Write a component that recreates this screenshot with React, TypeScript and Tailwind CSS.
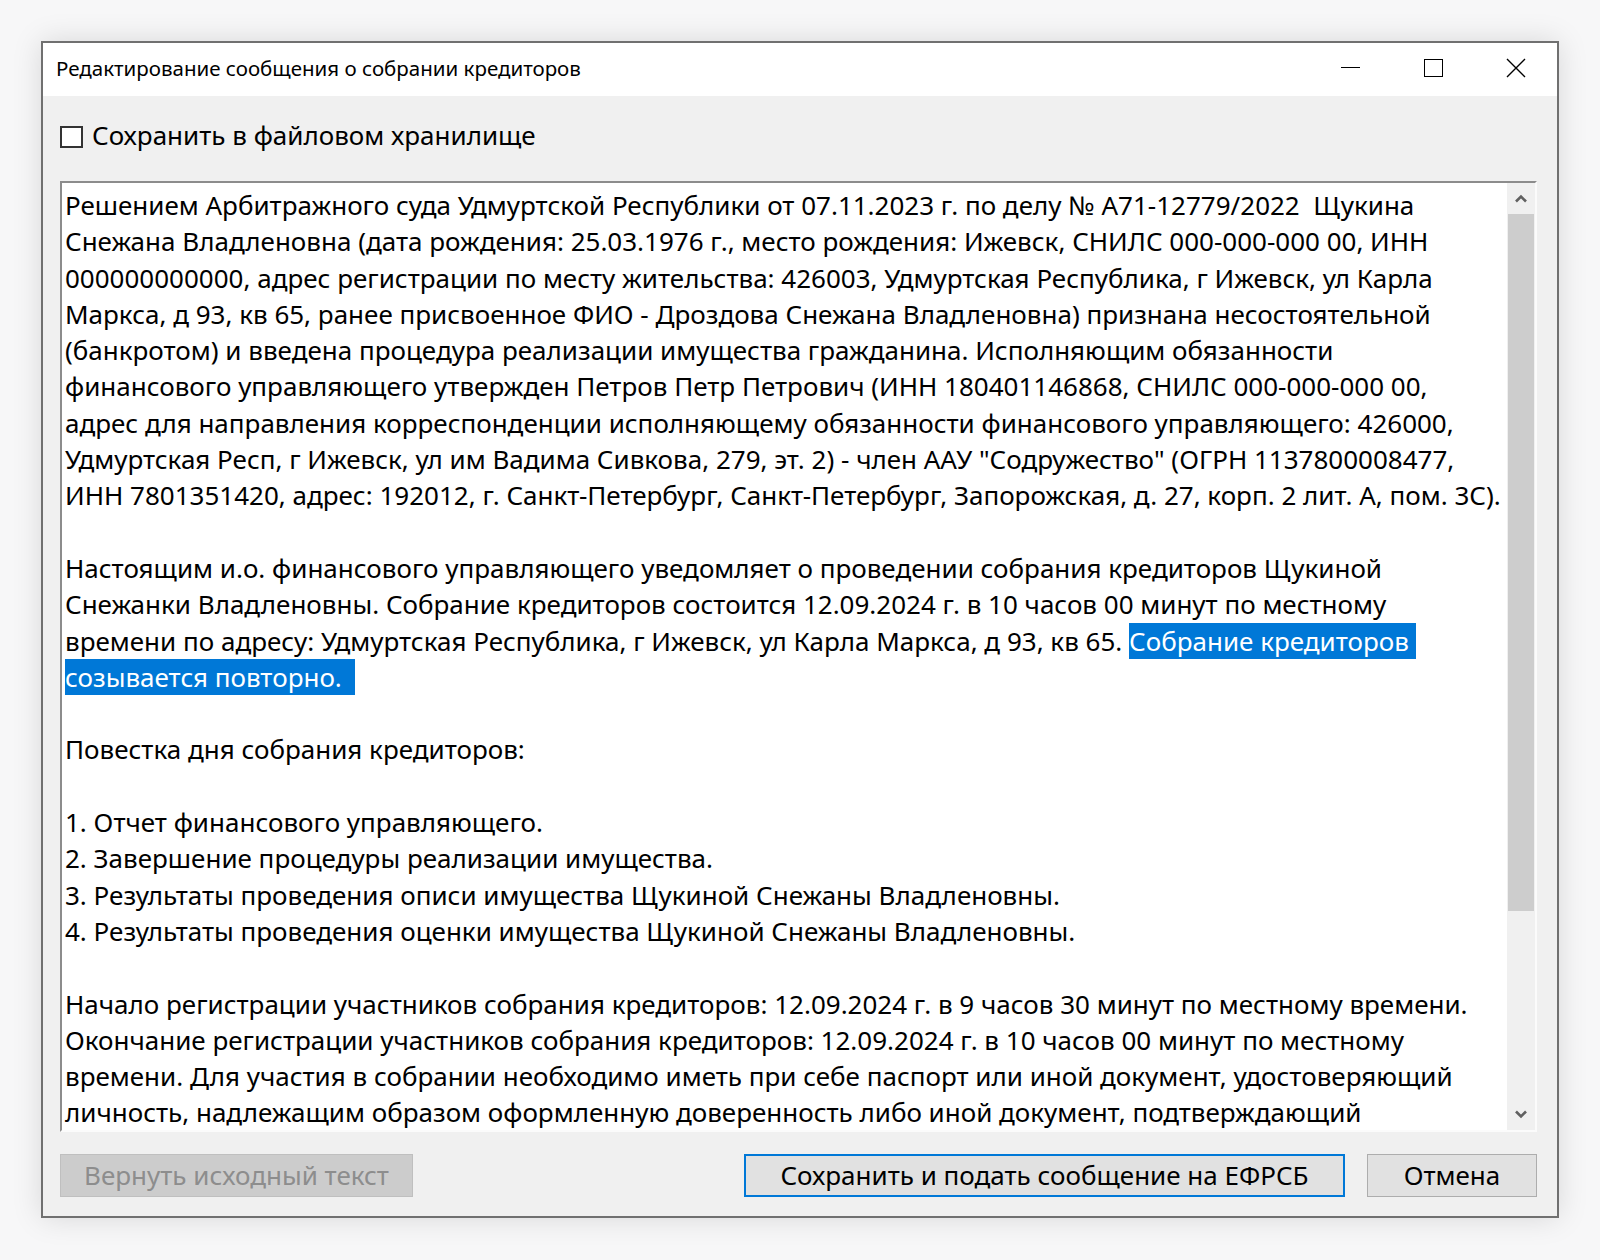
import React from "react";

const FONT = '"Noto Sans", "Segoe UI", sans-serif';

type Line = string | { pre: string; sel: string };

const lines: Line[] = [
  "Решением Арбитражного суда Удмуртской Республики от 07.11.2023 г. по делу № А71-12779/2022  Щукина",
  "Снежана Владленовна (дата рождения: 25.03.1976 г., место рождения: Ижевск, СНИЛС 000-000-000 00, ИНН",
  "000000000000, адрес регистрации по месту жительства: 426003, Удмуртская Республика, г Ижевск, ул Карла",
  "Маркса, д 93, кв 65, ранее присвоенное ФИО - Дроздова Снежана Владленовна) признана несостоятельной",
  "(банкротом) и введена процедура реализации имущества гражданина. Исполняющим обязанности",
  "финансового управляющего утвержден Петров Петр Петрович (ИНН 180401146868, СНИЛС 000-000-000 00,",
  "адрес для направления корреспонденции исполняющему обязанности финансового управляющего: 426000,",
  "Удмуртская Респ, г Ижевск, ул им Вадима Сивкова, 279, эт. 2) - член ААУ \"Содружество\" (ОГРН 1137800008477,",
  "ИНН 7801351420, адрес: 192012, г. Санкт-Петербург, Санкт-Петербург, Запорожская, д. 27, корп. 2 лит. А, пом. 3С).",
  "",
  "Настоящим и.о. финансового управляющего уведомляет о проведении собрания кредиторов Щукиной",
  "Снежанки Владленовны. Собрание кредиторов состоится 12.09.2024 г. в 10 часов 00 минут по местному",
  { pre: "времени по адресу: Удмуртская Республика, г Ижевск, ул Карла Маркса, д 93, кв 65. ", sel: "Собрание кредиторов " },
  { pre: "", sel: "созывается повторно.  " },
  "",
  "Повестка дня собрания кредиторов:",
  "",
  "1. Отчет финансового управляющего.",
  "2. Завершение процедуры реализации имущества.",
  "3. Результаты проведения описи имущества Щукиной Снежаны Владленовны.",
  "4. Результаты проведения оценки имущества Щукиной Снежаны Владленовны.",
  "",
  "Начало регистрации участников собрания кредиторов: 12.09.2024 г. в 9 часов 30 минут по местному времени.",
  "Окончание регистрации участников собрания кредиторов: 12.09.2024 г. в 10 часов 00 минут по местному",
  "времени. Для участия в собрании необходимо иметь при себе паспорт или иной документ, удостоверяющий",
  "личность, надлежащим образом оформленную доверенность либо иной документ, подтверждающий",
];

function Chevron({ up }: { up?: boolean }) {
  return (
    <svg width="14" height="9" viewBox="0 0 14 9" className="block">
      <polyline
        points={up ? "2,7.5 7,2.5 12,7.5" : "2,1.5 7,6.5 12,1.5"}
        fill="none"
        stroke="#606060"
        strokeWidth="2.6"
      />
    </svg>
  );
}

export default function App() {
  return (
    <div className="relative h-[1260px] w-[1600px] bg-[#f7f7f8]" style={{ fontFamily: FONT }}>
      <div className="absolute left-[41px] top-[41px] flex h-[1177px] w-[1518px] flex-col border-2 border-[#707070] bg-[#f0f0f0] shadow-[0_0_28px_rgba(0,0,0,0.13)]">
        {/* title bar */}
        <div className="flex h-[53px] shrink-0 items-center bg-white pl-[13px]">
          <div className="pb-[2px] text-[20.5px] text-black">Редактирование сообщения о собрании кредиторов</div>
          <div className="ml-auto flex h-full items-center pb-[4px]">
            <div className="flex w-[80px] justify-center pr-[6px]">
              <div className="h-px w-[19px] bg-black" />
            </div>
            <div className="flex w-[84px] justify-center pr-[4px]">
              <div className="h-[18px] w-[19px] border-[1.5px] border-black" />
            </div>
            <div className="flex w-[80px] justify-center pr-[2px]">
              <svg width="20" height="20" viewBox="0 0 20 20">
                <path d="M1 1 L19 19 M19 1 L1 19" stroke="#000" strokeWidth="1.4" />
              </svg>
            </div>
          </div>
        </div>
        {/* body */}
        <div className="flex flex-1 flex-col pl-[17px] pr-[20px] pb-[19px]">
          <div className="flex h-[85px] items-center gap-[9px] pb-[4px]">
            <div className="h-[22px] w-[23px] border-2 border-[#333] bg-white" />
            <span className="pb-[4px] text-[26px] leading-none text-black">Сохранить в файловом хранилище</span>
          </div>
          <div className="flex h-[951px] border-2 border-l-[#8c8c8c] border-t-[#8c8c8c] border-b-[#fbfbfb] border-r-[#fbfbfb]">
            <div className="flex-1 overflow-hidden bg-white pl-[3px] pt-[4px] text-[26px] text-black">
              {lines.map((l, i) => (
                <div key={i} className="h-[36.3px] whitespace-pre leading-[36.3px]">
                  {typeof l === "string" ? (
                    l === "" ? "\u00a0" : l
                  ) : (
                    <>
                      {l.pre}
                      <span className="bg-[#0078d7] text-white">{l.sel}</span>
                    </>
                  )}
                </div>
              ))}
            </div>
            <div className="flex w-[28px] flex-col bg-[#f0f0f0]">
              <div className="flex h-[31px] items-center justify-center">
                <Chevron up />
              </div>
              <div className="mx-px h-[697px] bg-[#cdcdcd]" />
              <div className="flex-1" />
              <div className="flex h-[31px] items-center justify-center">
                <Chevron />
              </div>
            </div>
          </div>
          <div className="mt-[22px] flex h-[43px]">
            <div className="flex w-[353px] items-center justify-center border border-[#bfbfbf] bg-[#cccccc] text-[26px] text-[#8d8d8d]">
              Вернуть исходный текст
            </div>
            <div className="ml-auto flex w-[601px] items-center justify-center border-2 border-[#0078d7] bg-[#e1e1e1] text-[26px] text-black">
              Сохранить и подать сообщение на ЕФРСБ
            </div>
            <div className="ml-[22px] flex w-[170px] items-center justify-center border border-[#adadad] bg-[#e1e1e1] text-[26px] text-black">
              Отмена
            </div>
          </div>
        </div>
      </div>
    </div>
  );
}
